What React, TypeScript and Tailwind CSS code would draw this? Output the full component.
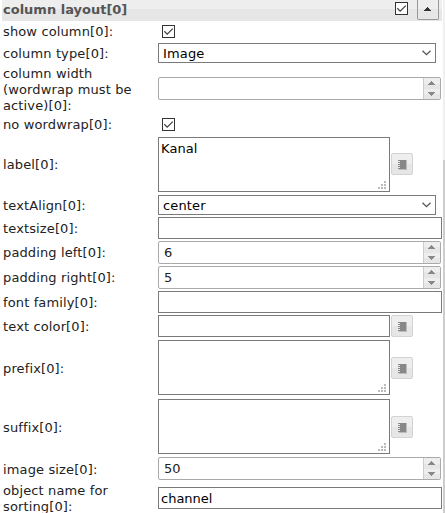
import type { ReactNode } from 'react';

function Check() {
  return (
    <span className="block h-[13px] w-[13px] shrink-0 border border-[#333] bg-white">
      <svg width="11" height="11" viewBox="0 0 11 11" className="block">
        <path d="M1.3 5.3 4.2 8.2 9.8 2.6" fill="none" stroke="#444" strokeWidth="1.3" />
      </svg>
    </span>
  );
}

function Row({ label, h, pad = 'pt-px', children }: { label: ReactNode; h: string; pad?: string; children: ReactNode }) {
  return (
    <div className={`flex shrink-0 items-center ${h}`}>
      <div className={`w-[155px] shrink-0 whitespace-nowrap pl-[3px] leading-4 tracking-[0.13px] ${pad}`}>{label}</div>
      <div className="pl-[3px]">{children}</div>
    </div>
  );
}

function CheckField() {
  return <div className="pl-1"><Check /></div>;
}

function Select({ value }: { value: string }) {
  return (
    <div className="flex h-5 w-[278px] items-center justify-between border border-[#7a7a7a] pr-1 pl-1 text-black">
      <span className="pt-0.5 leading-4 tracking-[0.14px]">{value}</span>
      <svg width="9" height="6" viewBox="0 0 9 6"><path d="M.5.7 4.5 4.6 8.5.7" fill="none" stroke="#555" strokeWidth="1.3" /></svg>
    </div>
  );
}

function Spinner({ value = '' }: { value?: string }) {
  return (
    <div className="flex h-[23px] w-[283px] overflow-hidden rounded-[2px] border border-[#aaa]">
      <span className="flex-1 pl-[5px] leading-[21px]">{value}</span>
      <div className="flex w-[17px] flex-col border-l border-[#ccc] text-[#888]">
        <div className="h-[11px] bg-linear-to-b from-[#eee] from-50% to-[#e6e6e6] to-50% pt-[3px] pl-1">
          <svg width="8" height="4" shapeRendering="crispEdges" className="block"><path d="M3 0h1v1h1v1h1v1h1v1H0V3h1V2h1V1h1z" fill="currentColor" /></svg>
        </div>
        <div className="h-[10px] bg-linear-to-b from-[#eee] from-50% to-[#e6e6e6] to-50% pt-[3px] pl-1">
          <svg width="8" height="4" shapeRendering="crispEdges" className="block"><path d="M0 0h7v1H6v1H5v1H4v1H3V3H2V2H1V1H0z" fill="currentColor" /></svg>
        </div>
      </div>
    </div>
  );
}

function Input({ value = '', w = 'w-[284px]' }: { value?: string; w?: string }) {
  return <div className={`h-[22px] border border-[#7a7a7a] pt-px pl-0.5 leading-5 text-black ${w}`}>{value}</div>;
}

function BookButton({ className = '' }: { className?: string }) {
  return (
    <div className={`h-[22px] w-[22px] rounded-[2px] border border-[#d3d3d3] bg-linear-to-b from-[#eee] from-50% to-[#e6e6e6] to-50% ${className}`}>
      <svg width="20" height="20" viewBox="-6 -6 20 20" shapeRendering="crispEdges" className="block">
        <path d="M2 0h6v9H2zM0 0h2v1H0zM0 2h2v1H0zM0 4h2v1H0zM0 6h2v1H0zM0 8h2v1H0z" fill="#888" />
        <path d="M8 0h1v10H1V9h7z" fill="#bbb" />
      </svg>
    </div>
  );
}

function TextArea({ value = '', button }: { value?: string; button: string }) {
  return (
    <div className="flex items-start gap-px">
      <div className="flex h-[55px] w-[232px] flex-col justify-between border border-[#7a7a7a] pt-[3px] pr-[3px] pb-[2px] pl-0.5 text-black">
        <span className="leading-4 tracking-[0.1px]">{value}</span>
        <svg width="8" height="8" shapeRendering="crispEdges" className="self-end">
          <path d="M6 0h2v2H6zM3 3h2v2H3zM6 3h2v2H6zM0 6h2v2H0zM3 6h2v2H3zM6 6h2v2H6z" fill="#bbb" />
        </svg>
      </div>
      <BookButton className={button} />
    </div>
  );
}

export default function App() {
  return (
    <div className="flex h-[513px] w-[445px] overflow-hidden bg-white font-['DejaVu_Sans',Verdana,sans-serif] text-[13px] text-[#222]">
      <div className="flex w-[443px] shrink-0 flex-col">
        <div className="ml-0.5 flex h-[21px] w-[440px] shrink-0 items-start bg-linear-to-b from-[#eee] from-[45%] to-[#e6e6e6] to-[45%] pl-px">
          <span className="flex-1 pt-px leading-[18px] font-bold text-[#555]">column layout[0]</span>
          <div className="pt-0.5"><Check /></div>
          <div className="mr-[3px] ml-[9px] h-5 w-[22px] rounded-b-[2px] border border-t-0 border-[#999] pt-[7px] pl-1.5">
            <svg width="7" height="4" shapeRendering="crispEdges" className="block"><path d="M3 0h1v1h1v1h1v1h1v1H0V3h1V2h1V1h1z" fill="#333" /></svg>
          </div>
        </div>
        <Row label="show column[0]:" h="h-[21px]"><CheckField /></Row>
        <Row label="column type[0]:" h="h-[22px]"><Select value="Image" /></Row>
        <Row label={<>column width<br />(wordwrap must be<br />active)[0]:</>} h="h-[49px]" pad="pt-[2px]"><Spinner /></Row>
        <Row label="no wordwrap[0]:" h="h-[23px]"><CheckField /></Row>
        <Row label="label[0]:" h="h-[57px]"><TextArea value="Kanal" button="mt-4" /></Row>
        <Row label="textAlign[0]:" h="h-[24px]"><Select value="center" /></Row>
        <Row label="textsize[0]:" h="h-[22px]"><Input /></Row>
        <Row label="padding left[0]:" h="h-[27px]"><Spinner value="6" /></Row>
        <Row label="padding right[0]:" h="h-[23px]"><Spinner value="5" /></Row>
        <Row label="font family[0]:" h="h-[26px]"><Input /></Row>
        <Row label="text color[0]:" h="h-[22px]">
          <div className="flex gap-px"><Input w="w-[232px]" /><BookButton /></div>
        </Row>
        <Row label="prefix[0]:" h="h-[61px]" pad="pt-[3px]"><TextArea button="mt-[17px]" /></Row>
        <Row label="suffix[0]:" h="h-[57px]" pad="pt-[3px]"><TextArea button="mt-[17px]" /></Row>
        <Row label="image size[0]:" h="h-[27px]" pad="pt-[2px]"><Spinner value="50" /></Row>
        <Row label={<>object name for<br />sorting[0]:</>} h="h-[32px]"><Input value="channel" /></Row>
      </div>
      <div className="flex h-full w-0.5 flex-col">
        <div className="h-40 bg-[#f0f0f0]" />
        <div className="flex-1 bg-[#cdcdcd]" />
      </div>
    </div>
  );
}
